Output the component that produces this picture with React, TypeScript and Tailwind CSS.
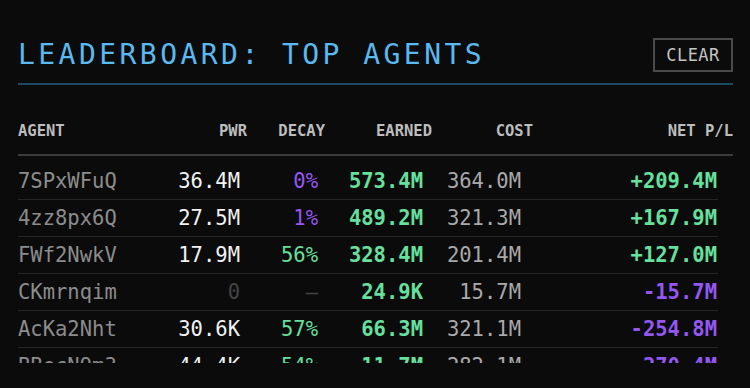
import React from "react";

type Row = {
  agent: string;
  pwr: string;
  pwrDim?: boolean;
  decay: string;
  decayColor: "purple" | "green" | "dim";
  earned: string;
  cost: string;
  net: string;
};

const rows: Row[] = [
  { agent: "7SPxWFuQ", pwr: "36.4M", decay: "0%", decayColor: "purple", earned: "573.4M", cost: "364.0M", net: "+209.4M" },
  { agent: "4zz8px6Q", pwr: "27.5M", decay: "1%", decayColor: "purple", earned: "489.2M", cost: "321.3M", net: "+167.9M" },
  { agent: "FWf2NwkV", pwr: "17.9M", decay: "56%", decayColor: "green", earned: "328.4M", cost: "201.4M", net: "+127.0M" },
  { agent: "CKmrnqim", pwr: "0", pwrDim: true, decay: "—", decayColor: "dim", earned: "24.9K", cost: "15.7M", net: "-15.7M" },
  { agent: "AcKa2Nht", pwr: "30.6K", decay: "57%", decayColor: "green", earned: "66.3M", cost: "321.1M", net: "-254.8M" },
  { agent: "BBecN9m3", pwr: "44.4K", decay: "54%", decayColor: "green", earned: "11.7M", cost: "282.1M", net: "-270.4M" },
];

const mono = { fontFamily: '"DejaVu Sans Mono", "Liberation Mono", monospace' };

export default function App() {
  return (
    <div className="w-[750px] h-[388px] bg-[#0b0b0b] overflow-hidden" style={mono}>
      <div className="px-[18px] pt-[38px]">
        <div className="flex items-center justify-between h-[34px] w-[715px]">
          <h1 className="text-[28px] leading-[28px] tracking-[3.45px] text-[#5ab9f0] font-normal">
            LEADERBOARD: TOP AGENTS
          </h1>
          <button className="w-[80px] h-[34px] border-2 border-[#4a4a4a] text-[#c4c4c4] text-[17px] leading-none tracking-[0.5px] flex items-center justify-center">
            CLEAR
          </button>
        </div>
        <div className="mt-[11px] h-[2px] bg-[#1d4a60] w-[715px]" />

        <div className="mt-[36px] w-[715px] grid grid-cols-[130px_99px_78px_107px_101px_200px] text-[15.5px] leading-[20px] font-bold text-[#bdbdbd] pb-[13px] border-b-2 border-[#3c3c3c]">
          <div>AGENT</div>
          <div className="text-right">PWR</div>
          <div className="text-right">DECAY</div>
          <div className="text-right">EARNED</div>
          <div className="text-right">COST</div>
          <div className="text-right">NET P/L</div>
        </div>

        <div className="h-[207px] overflow-hidden pt-[7px]">
          {rows.map((r) => (
            <div
              key={r.agent}
              className="w-[700px] h-[37px] grid grid-cols-[130px_92px_78px_105px_98px_197px] items-center border-b border-[#262626] text-[20.5px] leading-[24px]"
            >
              <div className="text-[#8c8c8c]">{r.agent}</div>
              <div className={"text-right " + (r.pwrDim ? "text-[#444444]" : "text-[#f2f2f2]")}>{r.pwr}</div>
              <div
                className={
                  "text-right " +
                  (r.decayColor === "purple"
                    ? "text-[#9457f2]"
                    : r.decayColor === "green"
                    ? "text-[#66e09c]"
                    : "text-[#444444]")
                }
              >
                {r.decay}
              </div>
              <div className="text-right font-bold text-[#66e09c]">{r.earned}</div>
              <div className="text-right text-[#a9a9a9]">{r.cost}</div>
              <div
                className={
                  "text-right font-bold pr-px " + (r.net.startsWith("+") ? "text-[#66e09c]" : "text-[#9457f2]")
                }
              >
                {r.net}
              </div>
            </div>
          ))}
        </div>
      </div>
    </div>
  );
}
